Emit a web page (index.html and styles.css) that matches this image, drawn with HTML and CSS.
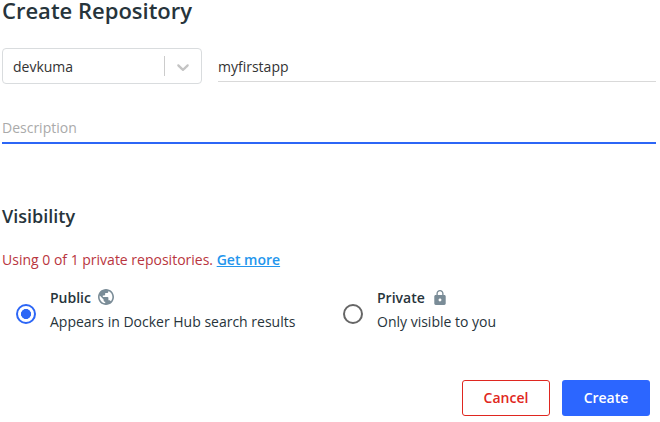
FILE: index.html
```html
<!DOCTYPE html>
<html lang="en">
<head>
<meta charset="utf-8">
<title>Create Repository</title>
<link rel="stylesheet" href="styles.css">
</head>
<body>
<main class="page">
  <h1 class="title">Create Repository</h1>
  <div class="name-row">
    <div class="select">
      <span class="select-value">devkuma</span>
      <span class="select-divider"></span>
      <svg class="chevron" viewBox="0 0 20 20"><path d="M4.516 7.548c.436-.446 1.043-.481 1.576 0L10 11.295l3.908-3.747c.533-.481 1.141-.446 1.574 0 .436.445.408 1.197 0 1.615-.406.418-4.695 4.502-4.695 4.502a1.095 1.095 0 0 1-1.576 0S4.924 9.581 4.516 9.163s-.436-1.17 0-1.615z"/></svg>
    </div>
    <div class="name-field">myfirstapp</div>
  </div>
  <div class="description">Description</div>
  <h2 class="subtitle">Visibility</h2>
  <p class="usage">Using 0 of 1 private repositories. <a class="link" href="#">Get more</a></p>
  <div class="options">
    <div class="option">
      <span class="radio radio-on"></span>
      <div>
        <div class="option-name">Public
          <svg class="globe" viewBox="2 2 20 20"><path d="M12 2C6.480 2 2 6.480 2 12s4.480 10 10 10 10-4.480 10-10S17.520 2 12 2zm-1 17.930c-3.950-.490-7-3.850-7-7.930 0-.620.080-1.210.210-1.790L9 15v1c0 1.100.900 2 2 2v1.930zm6.900-2.540c-.260-.810-1-1.390-1.900-1.390h-1v-3c0-.550-.450-1-1-1H8v-2h2c.550 0 1-.450 1-1V7h2c1.100 0 2-.900 2-2v-.410c2.930 1.190 5 4.060 5 7.410 0 2.080-.800 3.970-2.100 5.390z"/></svg>
        </div>
        <div class="option-text">Appears in Docker Hub search results</div>
      </div>
    </div>
    <div class="option">
      <span class="radio"></span>
      <div>
        <div class="option-name">Private
          <svg class="lock" viewBox="4 1 16 21"><path d="M18 8h-1V6c0-2.760-2.240-5-5-5S7 3.240 7 6v2H6c-1.100 0-2 .9-2 2v10c0 1.100.9 2 2 2h12c1.100 0 2-.9 2-2V10c0-1.100-.9-2-2-2zm-6 9c-1.100 0-2-.9-2-2s.9-2 2-2 2 .9 2 2-.9 2-2 2zm3.100-9H8.900V6c0-1.710 1.390-3.100 3.100-3.100s3.100 1.390 3.100 3.100v2z"/></svg>
        </div>
        <div class="option-text">Only visible to you</div>
      </div>
    </div>
  </div>
  <div class="actions">
    <button class="button cancel">Cancel</button>
    <button class="button create">Create</button>
  </div>
</main>
</body>
</html>
```
FILE: styles.css
```css
* { box-sizing: border-box; }
body {
  margin: 0;
  background: #fff;
  color: #27343b;
  font: 14px/24px "Open Sans", sans-serif;
}
.page { width: 656px; height: 422px; padding-left: 2px; }
.title { margin: 0; height: 48px; font-size: 22px; line-height: 20px; font-weight: 600; }
.name-row { display: flex; gap: 16px; height: 36px; color: #333; }
.select {
  display: flex;
  align-items: center;
  width: 200px;
  padding: 0 8px 0 10px;
  border: 1px solid #d9dcde;
  border-radius: 4px;
}
.select-value { flex: 1; padding-top: 2px; }
.select-divider { width: 1px; height: 20px; background: #ccc; }
.chevron { width: 20px; height: 20px; margin: 2px 0 0 8px; fill: #c4c4c4; }
.name-field { flex: 1; height: 34px; line-height: 38px; border-bottom: 1px solid #d9d9d9; }
.description {
  height: 28px;
  margin-top: 32px;
  border-bottom: 2px solid #2c66f6;
  color: #aaa;
}
.subtitle { margin: 60px 0 0; font-size: 18px; line-height: 24px; font-weight: 600; }
.usage { margin: 20px 0 14px; color: #b93540; }
.link { color: #2496ed; font-weight: 600; }
.options { display: flex; }
.option { display: flex; align-items: center; gap: 14px; width: 327px; height: 48px; padding-left: 14px; }
.radio { width: 20px; height: 20px; margin-top: 8px; border: 2px solid #666; border-radius: 50%; }
.radio-on { border-color: #2c66f6; background: radial-gradient(circle, #2c66f6 4.7px, #fff 5.3px); }
.option-name { display: flex; align-items: center; gap: 7px; font-weight: 600; }
.globe { width: 16px; height: 16px; margin-top: -2px; fill: #7a8c97; }
.lock { width: 12px; height: 15px; margin: -2px 0 0 2px; fill: #7a8c97; }
.actions { display: flex; justify-content: flex-end; gap: 12px; margin: 46px 6px 0 0; }
.button {
  width: 88px;
  height: 36px;
  padding: 0 0 2px;
  border-radius: 3px;
  font: 600 14px "Open Sans", sans-serif;
}
.cancel { border: 1px solid #df2720; background: #fff; color: #df2720; }
.create { border: 0; background: #2c66ff; color: #fff; }
```
